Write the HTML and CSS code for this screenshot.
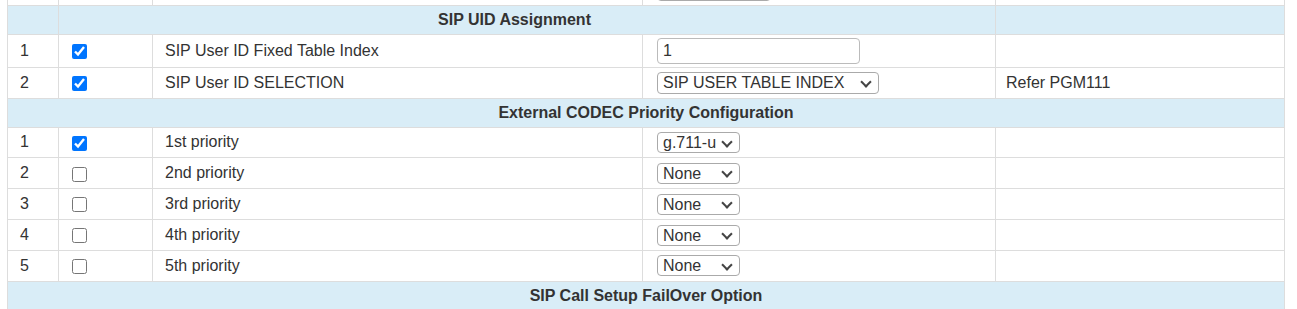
FILE: index.html
```html
<!DOCTYPE html>
<html lang="en">
<head>
    <meta charset="UTF-8">
    <meta name="viewport" content="width=device-width, initial-scale=1.0">
    <title>SIP Configuration</title>
    <link rel="stylesheet" href="styles.css">
</head>
<body>
    <div class="page">
        <table class="cfg">
            <colgroup>
                <col class="c-no">
                <col class="c-chk">
                <col class="c-name">
                <col class="c-val">
                <col class="c-note">
            </colgroup>
            <tbody>
                <!-- tail of the previous block, scrolled out of view -->
                <tr>
                    <td class="no"></td>
                    <td class="chk"></td>
                    <td></td>
                    <td class="field"><span class="sel"><select class="sel-prev"><option></option></select></span></td>
                    <td class="note"></td>
                </tr>
                <tr class="group">
                    <td></td>
                    <td colspan="3" class="group-title shifted">SIP UID Assignment</td>
                    <td></td>
                </tr>
                <tr class="tall">
                    <td class="no">1</td>
                    <td class="chk"><input type="checkbox" checked></td>
                    <td>SIP User ID Fixed Table Index</td>
                    <td class="field"><input type="text" class="txt" value="1"></td>
                    <td class="note"></td>
                </tr>
                <tr>
                    <td class="no">2</td>
                    <td class="chk"><input type="checkbox" checked></td>
                    <td>SIP User ID SELECTION</td>
                    <td class="field">
                        <span class="sel">
                            <select class="sel-wide">
                                <option>SIP USER TABLE INDEX</option>
                                <option>SIP USER ID</option>
                            </select>
                        </span>
                    </td>
                    <td class="note">Refer PGM111</td>
                </tr>
                <tr class="group">
                    <td colspan="5" class="group-title">External CODEC Priority Configuration</td>
                </tr>
                <tr>
                    <td class="no">1</td>
                    <td class="chk"><input type="checkbox" checked></td>
                    <td>1st priority</td>
                    <td class="field"><span class="sel"><select class="sel-codec"><option>g.711-u</option><option>None</option></select></span></td>
                    <td class="note"></td>
                </tr>
                <tr>
                    <td class="no">2</td>
                    <td class="chk"><input type="checkbox"></td>
                    <td>2nd priority</td>
                    <td class="field"><span class="sel"><select class="sel-codec"><option>None</option><option>g.711-a</option></select></span></td>
                    <td class="note"></td>
                </tr>
                <tr>
                    <td class="no">3</td>
                    <td class="chk"><input type="checkbox"></td>
                    <td>3rd priority</td>
                    <td class="field"><span class="sel"><select class="sel-codec"><option>None</option><option>g.729</option></select></span></td>
                    <td class="note"></td>
                </tr>
                <tr>
                    <td class="no">4</td>
                    <td class="chk"><input type="checkbox"></td>
                    <td>4th priority</td>
                    <td class="field"><span class="sel"><select class="sel-codec"><option>None</option><option>g.722</option></select></span></td>
                    <td class="note"></td>
                </tr>
                <tr>
                    <td class="no">5</td>
                    <td class="chk"><input type="checkbox"></td>
                    <td>5th priority</td>
                    <td class="field"><span class="sel"><select class="sel-codec"><option>None</option><option>g.726</option></select></span></td>
                    <td class="note"></td>
                </tr>
                <tr class="group">
                    <td colspan="5" class="group-title">SIP Call Setup FailOver Option</td>
                </tr>
            </tbody>
        </table>
    </div>
</body>
</html>
```

FILE: styles.css
```css
body {
    margin: 0;
    padding: 0;
    font-family: "Liberation Sans", Arial, sans-serif;
    font-size: 16px;
    color: #333;
    background: #fff;
    overflow: hidden;
}
.page {
    padding: 0 12px 0 7px;
}
.cfg {
    width: 100%;
    border-collapse: collapse;
    table-layout: fixed;
    margin-top: -26px;
}
.c-no { width: 51px; }
.c-chk { width: 94px; }
.c-name { width: 490px; }
.c-val { width: 353px; }

.cfg td {
    border: 1px solid #ddd;
    padding: 0 12px;
    height: 29.8px;
    line-height: 20px;
    vertical-align: middle;
    white-space: nowrap;
}
.cfg tr.tall td {
    height: 32px;
}
.cfg td.chk {
    padding-left: 13px;
}
.cfg td.field {
    padding-left: 14px;
}
.cfg td.note {
    padding-left: 10px;
}
.group td {
    background: #d9edf7;
    height: 28px;
}
.group-title {
    text-align: center;
    font-weight: bold;
}
.group-title.shifted {
    padding-right: 37px;
}

input[type="checkbox"] {
    width: 15px;
    height: 15px;
    margin: 0;
    vertical-align: middle;
}
.txt {
    box-sizing: border-box;
    width: 203px;
    height: 26px;
    padding: 0 5px;
    border: 1px solid #bbb;
    border-radius: 4px;
    font-family: inherit;
    font-size: 16px;
    color: #333;
    vertical-align: middle;
}

/* select with a drawn chevron */
.sel {
    position: relative;
    display: inline-block;
    vertical-align: middle;
    line-height: 0;
}
.sel::after {
    content: "";
    position: absolute;
    right: 9px;
    top: 50%;
    width: 6px;
    height: 6px;
    margin-top: -5px;
    border-right: 2px solid #444;
    border-bottom: 2px solid #444;
    transform: rotate(45deg);
    pointer-events: none;
}
select {
    -webkit-appearance: none;
    appearance: none;
    box-sizing: border-box;
    height: 22px;
    padding: 0 22px 0 5px;
    border: 1px solid #aaa;
    border-radius: 4px;
    background: #fff;
    font-family: inherit;
    font-size: 16px;
    line-height: 20px;
    color: #333;
}
.sel-wide { width: 222px; }
.sel-codec { width: 83px; height: 21px; }
.sel-prev { width: 114px; }
```
